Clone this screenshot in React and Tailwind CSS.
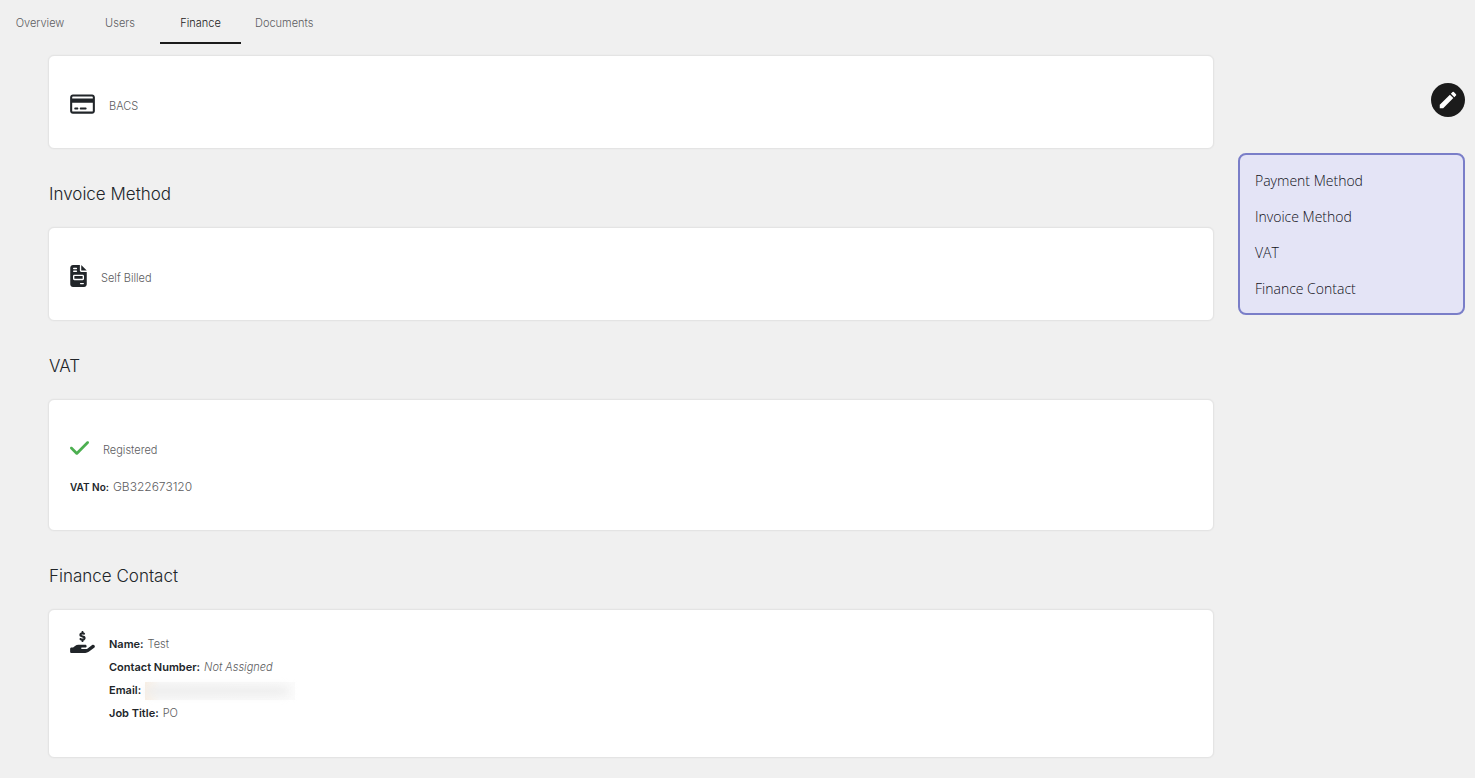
import React from 'react';
import { FaCheck, FaFileInvoice, FaHandHoldingDollar, FaRegCreditCard } from 'react-icons/fa6';
import { MdEdit } from 'react-icons/md';

const tabs = ['Overview', 'Users', 'Finance', 'Documents'];

const menuItems = [
  { label: 'Payment Method', href: '#payment-method' },
  { label: 'Invoice Method', href: '#invoice-method' },
  { label: 'VAT', href: '#vat' },
  { label: 'Finance Contact', href: '#finance-contact' },
];

function Section({ id, title, children }) {
  return (
    <section id={id}>
      {title && (
        <h2 className="pt-[33px] pb-[21px] pl-px text-[17px] leading-6 font-light text-[#212529]">{title}</h2>
      )}
      <div className="rounded-md border border-[#e4e4e4] bg-white px-[21px] shadow-[0_0_2px_rgba(0,0,0,0.06)]">
        {children}
      </div>
    </section>
  );
}

function IconRow({ icon, children }) {
  return (
    <div className="flex h-[22px] items-start gap-[14px]">
      {icon}
      <span className="pt-[3px] leading-5">{children}</span>
    </div>
  );
}

function Detail({ label, children }) {
  return (
    <div className="flex gap-1">
      <dt className="font-semibold text-[#212529]">{label}:</dt>
      <dd>{children}</dd>
    </div>
  );
}

export default function App() {
  return (
    <div className="min-h-screen bg-[#f0f0f0] pb-5 font-['Inter',sans-serif] text-[11px] font-light text-[#5c5c60]">
      <nav className="flex h-11">
        {tabs.map((tab) => (
          <a
            key={tab}
            href={`#${tab.toLowerCase()}`}
            className={
              tab === 'Finance'
                ? 'flex min-w-[81px] items-center justify-center border-b-2 border-[#1b1b1b] px-[14px] pt-1 text-[#1b1b1b]'
                : 'flex min-w-20 items-center justify-center px-[14px] pt-0.5'
            }
          >
            {tab}
          </a>
        ))}
      </nav>

      <div className="flex items-start gap-6 pt-[11px] pr-[10px] pl-12">
        <main className="min-w-0 flex-1">
          <Section id="payment-method">
            <div className="pt-[37px] pb-[33px]">
              <IconRow icon={<FaRegCreditCard className="h-[22px] w-[25px] text-[#212529]" />}>BACS</IconRow>
            </div>
          </Section>

          <Section id="invoice-method" title="Invoice Method">
            <div className="pt-[37px] pb-[33px]">
              <IconRow icon={<FaFileInvoice className="h-[22px] w-[17px] text-[#212529]" />}>Self Billed</IconRow>
            </div>
          </Section>

          <Section id="vat" title="VAT">
            <div className="pt-[37px] pb-[33px]">
              <IconRow icon={<FaCheck className="h-[22px] w-[19px] text-[#4caf50]" />}>Registered</IconRow>
              <p className="mt-[18px] flex gap-1 text-[12px] leading-5">
                <strong className="text-[10px] font-semibold text-[#212529]">VAT No:</strong> GB322673120
              </p>
            </div>
          </Section>

          <Section id="finance-contact" title="Finance Contact">
            <div className="flex items-start gap-[14px] pt-[21px] pb-8">
              <FaHandHoldingDollar className="h-[22px] w-[25px] text-[#212529]" />
              <dl className="mt-0.5 leading-[23px]">
                <Detail label="Name">Test</Detail>
                <Detail label="Contact Number">
                  <em>Not Assigned</em>
                </Detail>
                <Detail label="Email">
                  <span className="flex h-full items-center">
                    <span className="flex h-[18px] w-[150px] items-center bg-linear-to-r from-[#f9efe4] via-[#f8f8f8] via-10% to-[#fbfbfb]">
                      <span className="h-2 w-[144px] rounded-full bg-[#ececec] blur-[4px]" />
                    </span>
                  </span>
                </Detail>
                <Detail label="Job Title">PO</Detail>
              </dl>
            </div>
          </Section>
        </main>

        <aside className="flex w-[227px] shrink-0 flex-col items-end gap-9 pt-7">
          <button
            type="button"
            aria-label="Edit"
            className="flex size-[34px] items-center justify-center rounded-full bg-[#1b1b1b] text-white"
          >
            <MdEdit className="size-[22px]" />
          </button>
          <nav className="w-full rounded-lg border-2 border-[#7a7ec8] bg-[#e4e4f6] px-[15px] pt-2 pb-1.5 font-['Open_Sans',sans-serif] text-[14px] font-light text-[#101018]">
            {menuItems.map((item) => (
              <a key={item.href} href={item.href} className="block leading-9">
                {item.label}
              </a>
            ))}
          </nav>
        </aside>
      </div>
    </div>
  );
}
